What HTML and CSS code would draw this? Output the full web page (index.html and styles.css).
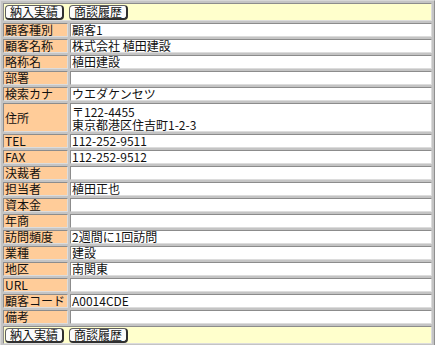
FILE: index.html
```html
<!DOCTYPE html>
<html lang="ja">
<head>
<meta charset="utf-8">
<link rel="stylesheet" href="styles.css">
</head>
<body>
<table class="sheet">
  <tr class="btnrow"><td colspan="2"><span class="btns"><button class="btn">納入実績</button><button class="btn">商談履歴</button></span></td></tr>
  <tr><th>顧客種別</th><td>顧客1</td></tr>
  <tr><th>顧客名称</th><td>株式会社 植田建設</td></tr>
  <tr><th>略称名</th><td>植田建設</td></tr>
  <tr><th>部署</th><td></td></tr>
  <tr><th>検索カナ</th><td>ウエダケンセツ</td></tr>
  <tr><th>住所</th><td class="addr">〒122-4455<br>東京都港区住吉町1-2-3</td></tr>
  <tr><th>TEL</th><td>112-252-9511</td></tr>
  <tr><th>FAX</th><td>112-252-9512</td></tr>
  <tr><th>決裁者</th><td></td></tr>
  <tr><th>担当者</th><td>植田正也</td></tr>
  <tr><th>資本金</th><td></td></tr>
  <tr><th>年商</th><td></td></tr>
  <tr><th>訪問頻度</th><td>2週間に1回訪問</td></tr>
  <tr><th>業種</th><td>建設</td></tr>
  <tr><th>地区</th><td>南関東</td></tr>
  <tr><th>URL</th><td></td></tr>
  <tr><th>顧客コード</th><td>A0014CDE</td></tr>
  <tr><th>備考</th><td></td></tr>
  <tr class="btnrow"><td colspan="2"><span class="btns"><button class="btn">納入実績</button><button class="btn">商談履歴</button></span></td></tr>
</table>
</body>
</html>
```
FILE: styles.css
```css
html, body {
  margin: 0;
  padding: 0;
  background: #ffffff;
}
.sheet {
  width: 435px;
  border-collapse: separate;
  border-spacing: 2px;
  border: 1px solid;
  border-color: #d8d8d8 #909090 #909090 #d8d8d8;
  background: #c4c4c4;
  font-family: "Noto Sans CJK JP", "DejaVu Sans", sans-serif;
  font-size: 12px;
  line-height: 12px;
  color: #111;
}
.sheet th, .sheet td {
  border: 1px solid;
  border-color: #8c8c8c #dcdcdc #dcdcdc #8c8c8c;
  padding: 0 1px;
  height: 12px;
  text-align: left;
  font-weight: normal;
  white-space: nowrap;
}
.sheet th {
  width: 61px;
  background: #ffcc99;
}
.sheet td {
  background: #ffffff;
}
.sheet td.addr {
  line-height: 13px;
  padding: 1px 1px 0;
}
.sheet .btnrow td {
  background: #ffffcc;
  height: 16px;
  padding: 0 1px;
}
.btns {
  display: flex;
  gap: 5px;
}
.btn {
  font-family: "Noto Sans CJK JP", sans-serif;
  font-size: 12px;
  line-height: 12px;
  width: 59px;
  height: 15px;
  padding: 0;
  margin: 0;
  background: #fbfbfb;
  border: 1px solid #606060;
  border-right: 2px solid #303030;
  border-bottom: 2px solid #303030;
  border-radius: 4px;
  color: #111;
}
```
